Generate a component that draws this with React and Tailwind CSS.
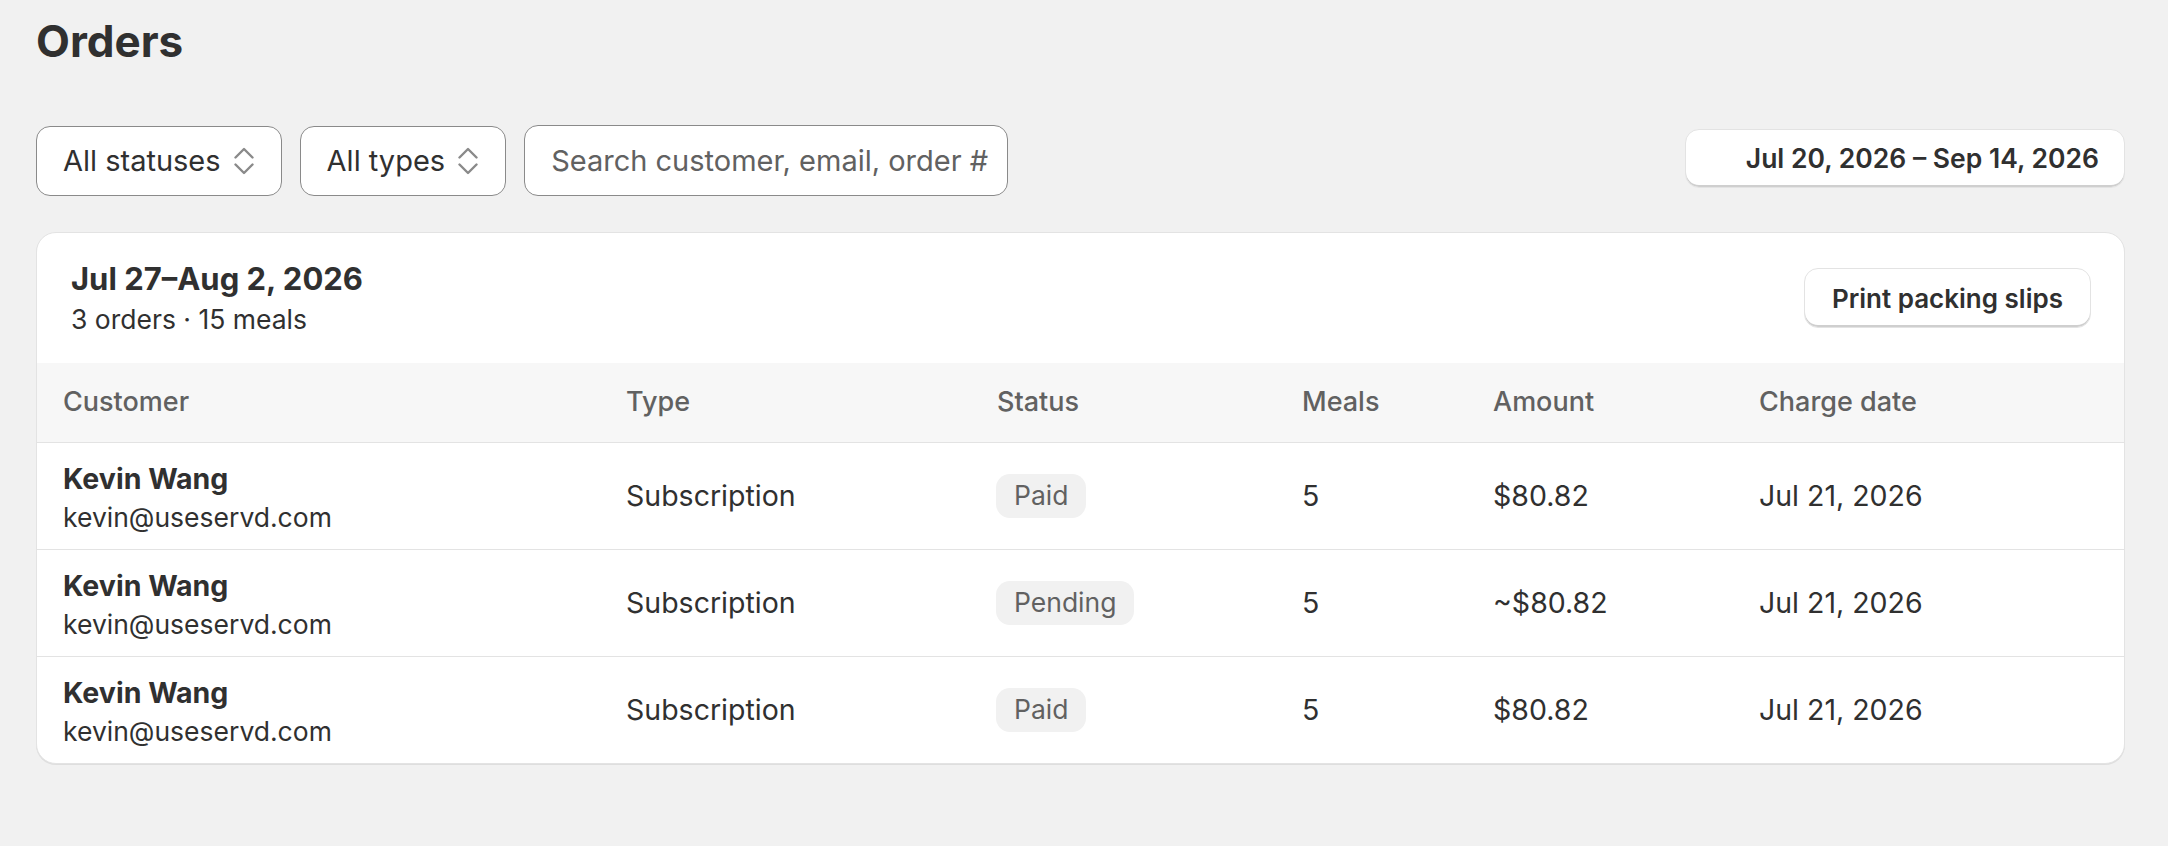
import React from "react";

function SelectIcon() {
  return (
    <svg className="h-[30px] w-[20px] shrink-0" viewBox="0 0 20 30" fill="none" stroke="#8a8a8a" strokeWidth="2.4" strokeLinecap="round" strokeLinejoin="round">
      <polyline points="1.5,11.5 10,3 18.5,11.5" />
      <polyline points="1.5,18.5 10,27 18.5,18.5" />
    </svg>
  );
}

function FilterButton({ label }) {
  return (
    <button className="flex h-[70px] items-center gap-[13px] rounded-[14px] border border-[#8a8a8a] bg-white pl-[26px] pr-[27px] text-[29px] text-[#303030]">
      <span>{label}</span>
      <SelectIcon />
    </button>
  );
}

const rows = [
  { status: "Paid", amount: "$80.82" },
  { status: "Pending", amount: "~$80.82" },
  { status: "Paid", amount: "$80.82" },
];

const cols = "grid grid-cols-[563px_371px_305px_191px_266px_1fr]";

export default function App() {
  return (
    <div className="min-h-[846px] bg-[#f1f1f1] pl-[36px] pr-[43px] pt-[19px] font-['Inter',sans-serif] text-[#303030]">
      <h1 className="text-[44px] font-bold leading-[45px]">Orders</h1>

      <div className="mt-[61px] flex items-center gap-[18px]">
        <FilterButton label="All statuses" />
        <FilterButton label="All types" />
        <div className="flex h-[71px] w-[484px] items-center overflow-hidden whitespace-nowrap rounded-[14px] border border-[#8a8a8a] bg-white pl-[26px] text-[29px] text-[#616161]">
          Search customer, email, order #
        </div>
        <button className="ml-auto mt-[-4px] flex h-[59px] items-center rounded-[14px] border border-[#e3e3e3] bg-white pl-[60px] pr-[25px] text-[26.5px] font-semibold shadow-[inset_0_-2px_0_0_#cfcfcf]">
          Jul 20, 2026 – Sep 14, 2026
        </button>
      </div>

      <div className="mt-[36px] overflow-hidden rounded-[20px] border border-[#e3e3e3] bg-white shadow-[0_1px_0_0_rgba(0,0,0,0.08)]">
        <div className="flex h-[130px] items-center justify-between pl-[34px] pr-[33px]">
          <div className="pt-[4px]">
            <div className="text-[31px] font-bold leading-[38px]">Jul 27–Aug 2, 2026</div>
            <div className="text-[26.5px] leading-[42px]">3 orders · 15 meals</div>
          </div>
          <button className="flex h-[60px] items-center rounded-[14px] border border-[#e3e3e3] bg-white px-[27px] text-[26px] font-semibold shadow-[inset_0_-2px_0_0_#cfcfcf]">
            Print packing slips
          </button>
        </div>

        <div className={`${cols} h-[80px] items-center border-b border-[#e3e3e3] bg-[#f7f7f7] text-[27px] font-medium text-[#616161]`}>
          <div className="pl-[26px]">Customer</div>
          <div className="pl-[26px]">Type</div>
          <div className="pl-[26px]">Status</div>
          <div className="pl-[26px]">Meals</div>
          <div className="pl-[26px]">Amount</div>
          <div className="pl-[26px]">Charge date</div>
        </div>

        {rows.map((r, i) => (
          <div
            key={i}
            className={`${cols} h-[106px] items-center text-[28.5px] ${i < rows.length - 1 ? "border-b border-[#e3e3e3] box-content" : ""}`}
          >
            <div className="pl-[26px] pt-[4px]">
              <div className="font-bold leading-[38px]">Kevin Wang</div>
              <div className="text-[26.5px] leading-[38px]">kevin@useservd.com</div>
            </div>
            <div className="pl-[26px]">Subscription</div>
            <div className="pl-[25px]">
              <span className="inline-flex h-[44px] items-center rounded-[14px] bg-[#f1f1f1] px-[18px] text-[26.5px] text-[#616161]">
                {r.status}
              </span>
            </div>
            <div className="pl-[26px]">5</div>
            <div className="pl-[26px]">{r.amount}</div>
            <div className="pl-[26px]">Jul 21, 2026</div>
          </div>
        ))}
      </div>
    </div>
  );
}
